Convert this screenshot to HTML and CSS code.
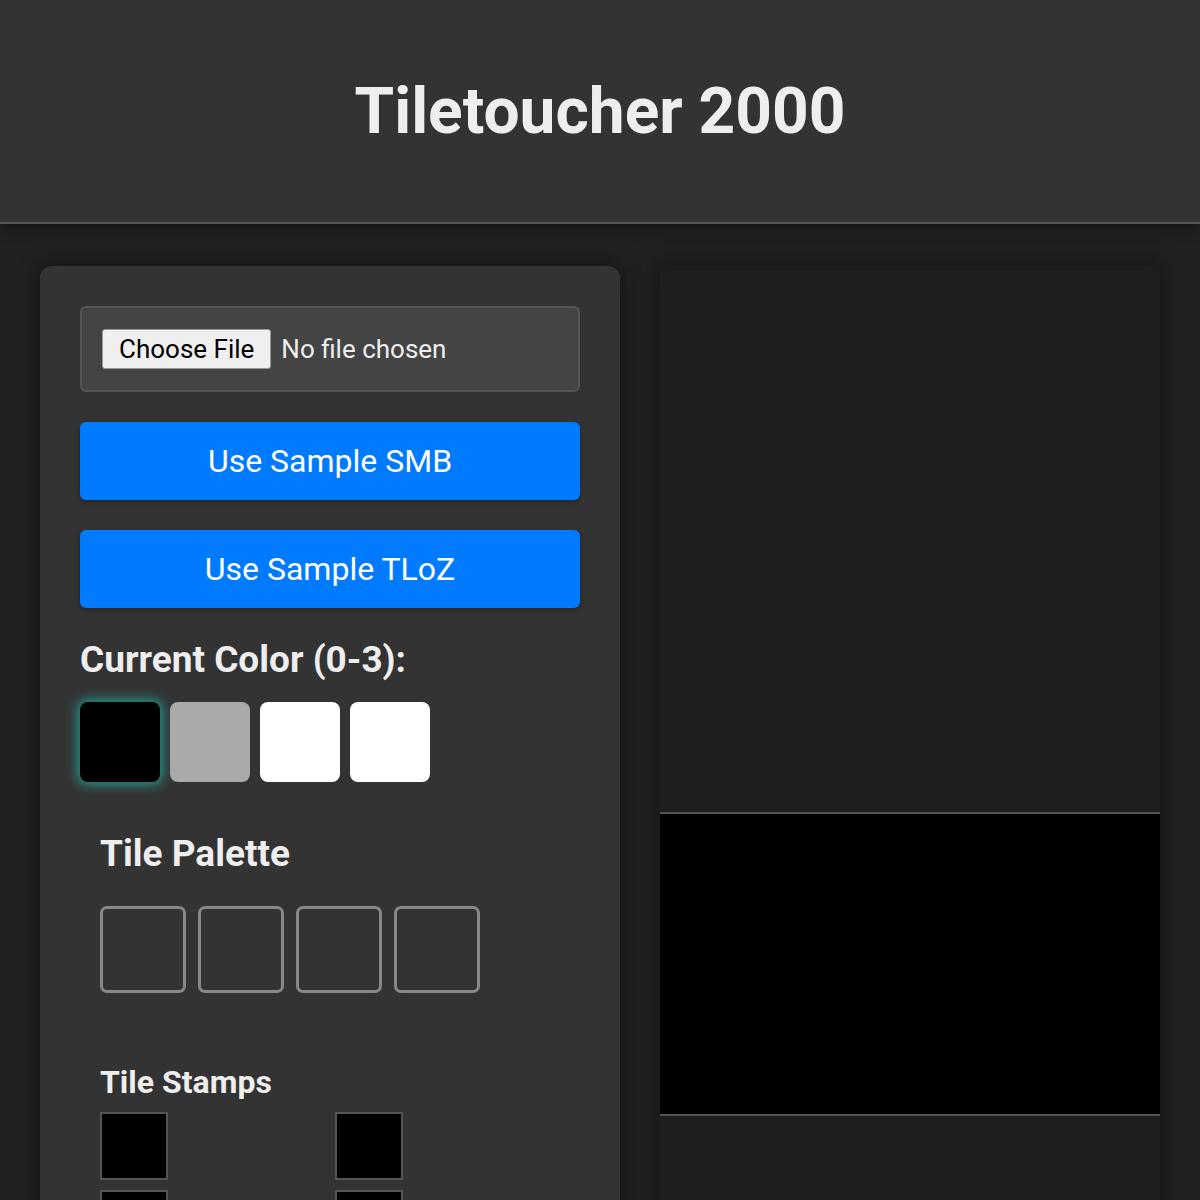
FILE: index.html
```html
<!DOCTYPE html>
<html lang="en">
<head>
  <meta charset="UTF-8">
  <title>Tiletoucher 2000</title>
  <link rel="stylesheet" href="styles.css">
</head>
<body>
  <header>
    <h1>Tiletoucher 2000</h1>
  </header>

  <main>
    <div class="controls">
      <div class="fileBox">
        <input type="file" id="romFile">
      </div>
      <button class="sampleBtn">Use Sample SMB</button>
      <button class="sampleBtn">Use Sample TLoZ</button>

      <h2>Current Color (0-3):</h2>
      <div class="colors">
        <div class="color selected" style="background: #000"></div>
        <div class="color" style="background: #aaa"></div>
        <div class="color" style="background: #fff"></div>
        <div class="color" style="background: #fff"></div>
      </div>

      <div class="section">
        <h2>Tile Palette</h2>
        <div class="palette">
          <div class="slot"></div>
          <div class="slot"></div>
          <div class="slot"></div>
          <div class="slot"></div>
        </div>
      </div>

      <div class="section">
        <h3>Tile Stamps</h3>
        <div class="stamps">
          <div class="stamp"></div>
          <div class="stamp"></div>
          <div class="stamp"></div>
          <div class="stamp"></div>
        </div>
      </div>
    </div>

    <div class="viewer">
      <div class="tileView"></div>
      <div class="editCanvas"></div>
    </div>
  </main>
</body>
</html>
```

FILE: styles.css
```css
body {
  margin: 0;
  padding: 0;
  font-family: Roboto, 'Liberation Sans', sans-serif;
  background-color: #212121;
  color: #eee;
}

header {
  background-color: #333;
  height: 222px;
  border-bottom: 2px solid #555;
  display: flex;
  justify-content: center;
  align-items: center;
  box-shadow: 0 2px 12px rgba(0,0,0,0.5);
}

header h1 {
  margin: 0;
  font-size: 64px;
  font-weight: bold;
  color: #eee;
}

main {
  display: flex;
  gap: 40px;
  padding: 42px 40px 40px;
  align-items: flex-start;
}

.controls {
  width: 500px;
  padding: 40px;
  background-color: #333;
  border-radius: 12px;
  box-shadow: 0 0 20px rgba(0,0,0,0.5);
}

.fileBox {
  background-color: #444;
  border: 2px solid #555;
  border-radius: 6px;
  padding: 21px 20px;
}

.fileBox input {
  font-family: inherit;
  font-size: 26px;
  color: #eee;
}

.fileBox input::file-selector-button {
  font-family: inherit;
  font-size: 26px;
  line-height: 30px;
  padding: 4px 16px;
  margin-right: 10px;
  background-color: #efefef;
  color: #000;
  border: 1px solid #999;
  border-radius: 3px;
}

.sampleBtn {
  display: block;
  width: 100%;
  height: 78px;
  margin-top: 30px;
  background-color: #007bff;
  color: white;
  border: none;
  border-radius: 6px;
  font-family: inherit;
  font-size: 32px;
  cursor: pointer;
  box-shadow: 0 2px 4px rgba(0,0,0,0.3);
}

.controls h2 {
  font-size: 37px;
  margin: 30px 0 21px;
}

.colors {
  display: flex;
  gap: 10px;
}

.color {
  width: 80px;
  height: 80px;
  border-radius: 8px;
  cursor: pointer;
}

.color.selected {
  box-shadow: 0 0 12px 3px rgba(32,178,170,0.75);
}

.section {
  padding: 20px;
}

.section h2 {
  margin: 30px 0 31px;
}

.palette {
  display: flex;
  gap: 12px;
}

.slot {
  width: 80px;
  height: 81px;
  border: 3px solid #888;
  border-radius: 7px;
}

.section h3 {
  font-size: 32px;
  margin: 30px 0 11px;
}

.stamps {
  display: grid;
  grid-template-columns: repeat(2, 1fr);
  gap: 10px;
}

.stamp {
  width: 64px;
  height: 64px;
  background-color: #000;
  border: 2px solid #555;
}

.viewer {
  width: 500px;
  height: 1000px;
  background-color: #1e1e1e;
  box-shadow: 0 0 20px rgba(0,0,0,0.5);
}

.tileView {
  height: 546px;
}

.editCanvas {
  height: 300px;
  background-color: #000;
  border-top: 2px solid #555;
  border-bottom: 2px solid #555;
}
```
